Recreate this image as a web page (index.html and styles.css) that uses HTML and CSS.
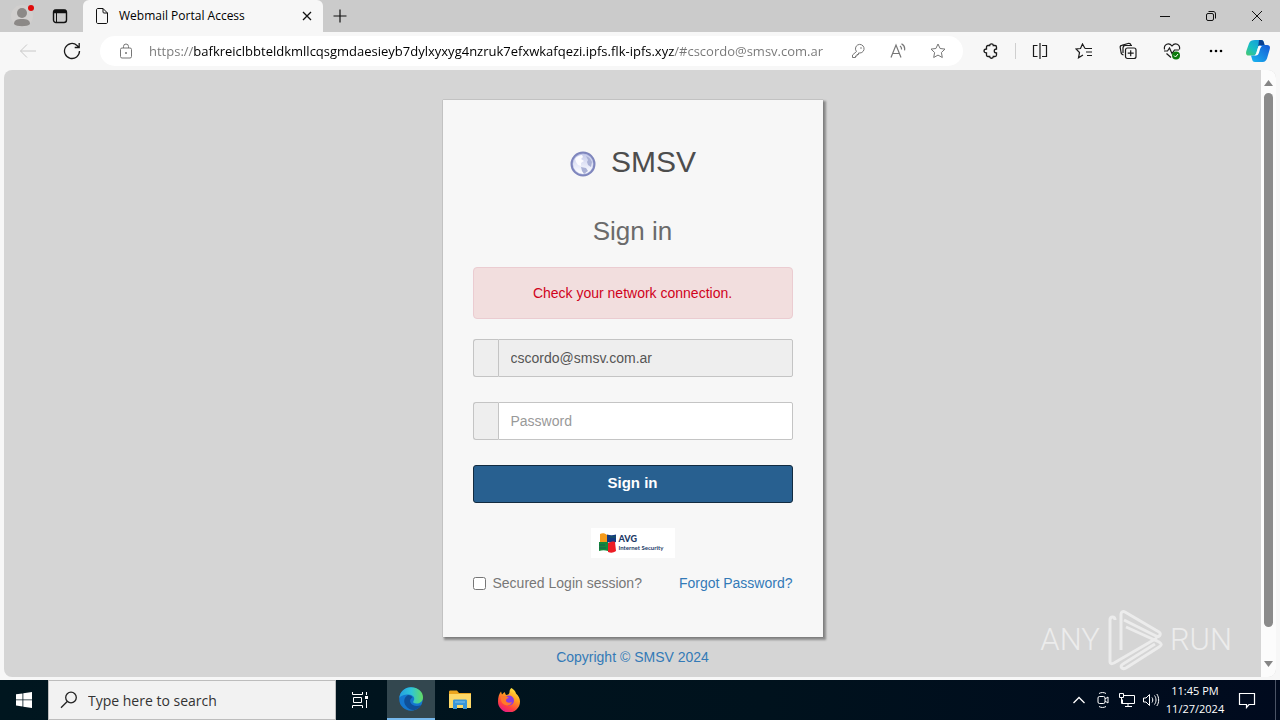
FILE: index.html
```html
<!DOCTYPE html>
<html lang="en">
  <head>
    <meta charset="UTF-8" />
    <meta name="viewport" content="width=device-width, initial-scale=1.0" />
    <title>Webmail Portal Access</title>
    <link rel="stylesheet" href="styles.css">
  </head>
  <body>
    <!-- Tab strip -->
    <header class="titlebar">
      <button class="profile" aria-label="Profile">
        <svg width="32" height="32" viewBox="0 0 32 32">
          <circle cx="16" cy="16" r="11" fill="#d1cfce" />
          <circle cx="16" cy="13" r="5" fill="#8c8987" />
          <path d="M8 24c0-4 3-5 8-5s8 1 8 5c-2 3-14 3-16 0z" fill="#8c8987" />
          <circle cx="25" cy="8" r="3" fill="#e00b0b" />
        </svg>
      </button>
      <button class="workspaces" aria-label="Tab actions">
        <svg class="icon" width="16" height="16" viewBox="0 0 16 16">
          <rect x="1.5" y="2" width="13" height="12.5" rx="2.5" stroke-width="1.4" />
          <path d="M2 3.5h12" stroke-width="3.5" />
          <path d="M4.500 5v9" stroke-width="1" />
        </svg>
      </button>
      <div class="tab">
        <svg class="icon" width="14" height="18" viewBox="0 0 14 18">
          <path d="M3 1.500h5l4.500 4.500v9c0 1-.5 1.500-1.500 1.500H3c-1 0-1.500-.5-1.500-1.500V3c0-1 .5-1.500 1.500-1.500zM8 1.500V5c0 .7.300 1 1 1h3.500" />
        </svg>
        <span class="tab-title">Webmail Portal Access</span>
        <button class="tab-close" aria-label="Close tab">
          <svg class="icon" width="10" height="10" viewBox="0 0 10 10"><path d="M1 1l8 8M9 1L1 9" stroke-width="1.3" /></svg>
        </button>
      </div>
      <button class="new-tab" aria-label="New tab">
        <svg class="icon" width="14" height="14" viewBox="0 0 14 14"><path d="M7 .5v13M.5 7h13" stroke-width="1.2" /></svg>
      </button>
      <div class="window-controls">
        <button aria-label="Minimize"><svg class="icon" width="12" height="12" viewBox="0 0 12 12"><path d="M1 6.500h10" /></svg></button>
        <button aria-label="Restore">
          <svg class="icon" width="12" height="12" viewBox="0 0 12 12">
            <rect x="1.5" y="3.5" width="7" height="7" rx="1.5" />
            <path d="M3.500 1.500H8C9.700 1.500 10.500 2.300 10.500 4v4.500" />
          </svg>
        </button>
        <button aria-label="Close"><svg class="icon" width="12" height="12" viewBox="0 0 12 12"><path d="M1 1l10 10M11 1L1 11" /></svg></button>
      </div>
    </header>

    <!-- Address bar and extensions -->
    <nav class="toolbar">
      <button class="tool back" aria-label="Back">
        <svg class="icon" width="18" height="16" viewBox="0 0 18 16"><path d="M8 1.500L1.500 8 8 14.500M1.500 8h15.500" /></svg>
      </button>
      <button class="tool" aria-label="Refresh">
        <svg class="icon" width="18" height="18" viewBox="0 0 18 18"><path d="M16.500 9a7.500 7.500 0 1 1-2.500-5.600L16 5.200M16.200 1v4.500h-4.500" stroke-width="1.3" /></svg>
      </button>
      <div class="address">
        <button class="site-info" aria-label="Site information">
          <svg class="icon" width="14" height="16" viewBox="0 0 14 16">
            <rect x="1.5" y="5" width="11" height="10" rx="1.5" />
            <path d="M4.500 5V3.500a2.500 2.500 0 0 1 5 0V5" />
            <circle cx="7" cy="10" r="1" class="filled" />
          </svg>
        </button>
        <input class="url" type="text" aria-label="Address" value="https://bafkreiclbbteldkmllcqsgmdaesieyb7dylxyxyg4nzruk7efxwkafqezi.ipfs.flk-ipfs.xyz/#cscordo@smsv.com.ar" />
        <button class="address-action" aria-label="Saved passwords">
          <svg class="icon" width="16" height="16" viewBox="0 0 16 16">
            <path d="M6.500 8.500A4.300 4.300 0 1 1 10 10H8.500v1.500H7V13H5.500v1.500h-3V12z" />
            <circle cx="11" cy="5" r=".8" class="filled" />
          </svg>
        </button>
        <button class="address-action" aria-label="Read aloud">
          <svg class="icon" width="16" height="16" viewBox="0 0 16 16">
            <path d="M1 14.500L6 2l5 12.500M2.800 10.500h6.500M10 3c1.200.8 1.700 2 1.500 3.500M11.500.800c2.600 1.500 3.600 4 3 6.500" stroke-width="1.2" />
          </svg>
        </button>
        <button class="address-action" aria-label="Add to favorites">
          <svg class="icon" width="16" height="16" viewBox="0 0 16 16"><path d="M8 1l2.100 4.500 4.900.6-3.600 3.400.9 5L8 12.100l-4.300 2.400.9-5L1 6.100l4.900-.6z" /></svg>
        </button>
      </div>
      <button class="tool" aria-label="Extensions">
        <svg class="icon" width="16" height="16" viewBox="0 0 16 16">
          <path d="M3.500 4c0-1 .5-1.500 1.500-1.500h1.700c0-2.300 3.600-2.300 3.600 0H12c1 0 1.500.5 1.500 1.500v2c-3 0-3 4 0 4v2c0 1-.5 1.500-1.500 1.500h-1.700c0 2.300-3.600 2.300-3.600 0H5c-1 0-1.500-.5-1.500-1.500v-2c-3.300 0-3.300-4 0-4z" stroke-width="1.3" />
        </svg>
      </button>
      <span class="divider"></span>
      <button class="tool" aria-label="Split screen">
        <svg class="icon" width="16" height="16" viewBox="0 0 16 16"><path d="M5.500 2.500h-4v11h4M10 2.500h4.500v11H10M8 0v16" stroke-width="1.2" /></svg>
      </button>
      <button class="tool" aria-label="Favorites">
        <svg class="icon" width="18" height="16" viewBox="0 0 18 16"><path d="M10 5.500L7.500 1 5.500 5.500 1 6l3.500 3.500-1 5.300L8 12M10 5.500h7M11 9h6M12 12.500h5" stroke-width="1.2" /></svg>
      </button>
      <button class="tool" aria-label="Collections">
        <svg class="icon" width="18" height="18" viewBox="0 0 18 18">
          <path d="M4.500 13C2.500 12.500 2 11.500 2 10L1.200 5.500c-.2-1.300.3-2 1.500-2.200L9 1.500c1.500-.3 2.500 0 3 1.500M4 11V6c0-1.700.8-2.500 2.500-2.500H13" stroke-width="1.2" />
          <rect x="6.5" y="6" width="10.500" height="10.500" rx="2" stroke-width="1.2" fill="#f7f7f7" />
          <path d="M11.700 8.200v6M8.700 11.200h6" stroke-width="1.2" />
        </svg>
      </button>
      <button class="tool" aria-label="Browser essentials">
        <svg class="icon" width="18" height="18" viewBox="0 0 18 18">
          <path d="M1.500 7.500C.5 2 6 0 9 4c3-4 8.500-2 7.500 3.500M1 9h3.500l2-3 2.500 5.500L11.500 8H16M3.500 11.500L8 15.500" stroke-width="1.2" />
          <circle cx="13" cy="13.500" r="4" fill="#0d7a0d" stroke="none" />
          <path d="M11 13.500l1.500 1.500 2.500-3" stroke="#fff" />
        </svg>
      </button>
      <button class="tool" aria-label="Settings and more">
        <svg width="16" height="16" viewBox="0 0 16 16"><circle cx="3" cy="8" r="1.3" /><circle cx="8" cy="8" r="1.3" /><circle cx="13" cy="8" r="1.3" /></svg>
      </button>
      <button class="tool copilot" aria-label="Copilot">
        <svg width="24" height="24" viewBox="0 0 24 24">
          <defs>
            <linearGradient id="cpLeft" x1="0" y1="1" x2="1" y2="0"><stop offset="0" stop-color="#4bc96b" /><stop offset=".4" stop-color="#18bfc4" /><stop offset="1" stop-color="#1592e6" /></linearGradient>
            <linearGradient id="cpRight" x1="0" y1="1" x2="1" y2="0"><stop offset="0" stop-color="#19b7ef" /><stop offset="1" stop-color="#1558d6" /></linearGradient>
          </defs>
          <path d="M9 1h6c2 0 2.500 1 3 3l.5 2H15c-2 0-2.500 1-3 2.500l-2 6c-.5 1.500-1 2-2.500 2H3c-3 0-3.500-2-2.500-5L3 4.500C4 1.500 6 1 9 1z" fill="url(#cpLeft)" />
          <path d="M13 1h2c2 0 2.500 1 3 3l.5 2H15c-1.500 0-2.300.7-2.800 2z" fill="#0a3f8f" />
          <path d="M15 23H9c-2 0-2.500-1-3-3l-1-3.500h3c2 0 2.500-.7 3-2.200l2-6C13.500 6.700 14 6 15.500 6H21c3 0 3.500 2 2.500 5L21 19.500c-1 3-3 3.500-6 3.500z" fill="url(#cpRight)" />
          <path d="M12.500 7h3.500c-1.500 1-2 3-2.500 5-.8 3-1.500 4.500-4 4.500H8c2-.5 2.500-2 3-4z" fill="#fff" />
        </svg>
      </button>
    </nav>

    <!-- Page -->
    <div class="viewport">
      <main class="page">
        <section class="card">
          <div class="brand">
            <svg width="28" height="28" viewBox="0 0 28 28">
              <defs>
                <linearGradient id="globe" x1="0" y1="0" x2="0" y2="1"><stop offset="0" stop-color="#c5caea" /><stop offset=".7" stop-color="#eef0fb" /><stop offset="1" stop-color="#ffffff" /></linearGradient>
              </defs>
              <circle cx="14" cy="14" r="11.5" fill="#b4bbe0" stroke="#7f86bd" stroke-width="2" />
              <circle cx="14" cy="14" r="10" fill="url(#globe)" />
              <path d="M6 9c2-3 5-4 7-4l1 2-2 2 3 2-3 2v3l-3-1-2-3z" fill="#fbfbff" />
              <path d="M17 6c3 1 5 3 6 6l-1 5-3-2-1-3 1-2zM12 17l5 1 2 3-4 3-2-3z" fill="#aab1d6" />
            </svg>
            <h1>SMSV</h1>
          </div>
          <h2>Sign in</h2>
          <div class="alert" role="alert">Check your network connection.</div>
          <form id="loginForm">
            <div class="input-group">
              <span class="addon"></span>
              <input type="email" name="email" aria-label="Email" value="cscordo@smsv.com.ar" readonly />
            </div>
            <div class="input-group">
              <span class="addon"></span>
              <input type="password" name="password" aria-label="Password" placeholder="Password" />
            </div>
            <button class="submit" type="submit">Sign in</button>
            <div class="badge">
              <svg width="18" height="20" viewBox="0 0 18 20">
                <path d="M1 1c2-1 5-1 7 1v7H1z" fill="#f59b1c" />
                <path d="M8 1.500c3 1 6 1 9 0V9c-2 1-6 1-9 0z" fill="#123a82" />
                <path d="M0 9h9v9c-3-1-6-1-9 0z" fill="#128a3a" />
                <path d="M9 10c3-1 5-2 7-1l1 9c-3 2-5 2-8 1z" fill="#ed1c24" />
                <path d="M0 12h6M0 15h7M11 4h6" stroke="#1a5b52" stroke-width="1" />
              </svg>
              <div class="badge-text"><strong>AVG</strong><span>Internet Security</span></div>
            </div>
            <div class="options">
              <label for="secured"><input type="checkbox" id="secured" name="secured" />Secured Login session?</label>
              <a href="#">Forgot Password?</a>
            </div>
          </form>
        </section>
        <a class="copyright" href="#">Copyright © SMSV 2024</a>
      </main>
      <div class="scrollbar">
        <svg width="9" height="6" viewBox="0 0 9 6"><path d="M4.500 0L9 6H0z" /></svg>
        <span class="thumb"></span>
        <svg width="9" height="6" viewBox="0 0 9 6"><path d="M4.500 6L9 0H0z" /></svg>
      </div>
    </div>

    <div class="watermark">
      <span>ANY</span>
      <svg width="58" height="64" viewBox="0 0 58 64">
        <path d="M9 12c0-4-5-4-5 0v42c0 2 2 2 4 1l43-25" />
        <path d="M15 42V6c0-2 2-3 4-2l34 20c3 2 0 6-3 4L18 12" />
        <path d="M20 19l33 15c3 2 3 3 0 5L20 60c-4 2-7-2-3-4l32-20" />
      </svg>
      <span>RUN</span>
    </div>

    <!-- Taskbar -->
    <footer class="taskbar">
      <button class="start" aria-label="Start">
        <svg width="16" height="16" viewBox="0 0 16 16"><path d="M0 2.300l6.500-.9v6.100H0zM7.300 1.300L16 0v7.500H7.300zM0 8.300h6.500v6.200L0 13.600zM7.300 8.300H16V16l-8.700-1.300z" fill="#fff" /></svg>
      </button>
      <div class="search">
        <svg class="icon" width="18" height="18" viewBox="0 0 18 18"><circle cx="11" cy="6.5" r="5.3" stroke-width="1.3" /><path d="M7.200 10.500L1 16.800" stroke-width="1.3" /></svg>
        <input type="text" aria-label="Search" placeholder="Type here to search" />
      </div>
      <button class="app task-view" aria-label="Task view">
        <svg class="icon" width="18" height="18" viewBox="0 0 18 18"><path d="M1.500 1v2.500h10V1M1.500 17v-2.500h10V17M2.500 6.500h8v5h-8zM15.500 1v3M15.500 9v8" /><path d="M14 5h3v3h-3z" class="filled" /></svg>
      </button>
      <button class="app active" aria-label="Microsoft Edge">
        <svg width="24" height="24" viewBox="0 0 24 24">
          <defs>
            <linearGradient id="edgeTop"><stop offset="0" stop-color="#249fe0" /><stop offset=".5" stop-color="#2fc5d8" /><stop offset="1" stop-color="#63dc62" /></linearGradient>
          </defs>
          <circle cx="12" cy="12" r="11.8" fill="#1577cf" />
          <path d="M.3 11C1 4.500 6 .2 12 .2c7 0 12 4.500 12 10 0 4-3 6.300-6.500 6.300-3 0-4-1.200-3-2.500 2-2.500 0-6.500-5-6.500C5 7.500 1.500 9 .3 11z" fill="url(#edgeTop)" />
          <path d="M9 8c-4 2-5 7-2 11 2.500 3.500 6.500 5 10 3.600 2-.8 4-2.600 5-4.600-4 2-9 1-10.500-2.500C10.500 13 12 11 13.500 10.500 13 9 11 8 9 8z" fill="#0f5099" />
        </svg>
      </button>
      <button class="app" aria-label="File Explorer">
        <svg width="22" height="20" viewBox="0 0 22 20">
          <path d="M0 2c0-1 .5-1.500 1.500-1.500H8L10 3h12v15H0z" fill="#eba51f" />
          <path d="M0 4h22v14H0z" fill="#fdd868" />
          <path d="M4 19v-8c0-1 .5-1.500 1.500-1.500h11c1 0 1.500.5 1.500 1.500v8h-4v-4H8v4z" fill="#3a95d8" />
          <path d="M6 12h10" stroke="#7fc2ee" />
        </svg>
      </button>
      <button class="app" aria-label="Firefox">
        <svg width="24" height="24" viewBox="0 0 24 24">
          <defs>
            <linearGradient id="fox" x1=".8" y1="0" x2=".3" y2="1"><stop offset="0" stop-color="#fff044" /><stop offset=".4" stop-color="#ff9a1f" /><stop offset=".75" stop-color="#ff4040" /><stop offset="1" stop-color="#e5188b" /></linearGradient>
          </defs>
          <path d="M14.500 0c3 2 4 3.500 4.500 5.500 2.500 2 4 5 4 8A11 11 0 0 1 1 13.500C1 9 2 6 4 3.500l1 3L7.500 4l1.500 3c2 0 3.500-1 3.500-3 0-1.700.7-3 2-4z" fill="url(#fox)" />
          <circle cx="12" cy="12.5" r="5" fill="#8a3be0" />
          <path d="M4 9c3-2 6-1 8 1-2 0-3 1-3 2.500 0 2 3 3 6 1.500-1 3-4 4-7 3-3-1-4.500-4-4-8z" fill="#ff7a2a" />
        </svg>
      </button>
      <div class="tray">
        <button aria-label="Show hidden icons"><svg class="icon" width="14" height="14" viewBox="0 0 14 14"><path d="M1.500 10L7 4.500l5.500 5.500" stroke-width="1.3" /></svg></button>
        <button aria-label="Meet now"><svg class="icon" width="16" height="18" viewBox="0 0 16 18"><rect x="3" y="5.5" width="7" height="7" rx="1.5" /><path d="M10 8l3-2v6l-3-2M4 2.500c2-1.300 5-1.300 7 0M4 15.500c2 1.300 5 1.300 7 0" /></svg></button>
        <button aria-label="Network"><svg class="icon" width="18" height="16" viewBox="0 0 18 16"><path d="M6 3.500h10.500v8H4.500v-4M10 11.500v3M7 14.500h7M1.500 1.500h4v4h-4zM3.500 5.500v6h2" /></svg></button>
        <button aria-label="Volume"><svg class="icon" width="18" height="16" viewBox="0 0 18 16"><path d="M1.500 6H4l3.500-3.500v11L4 10H1.500zM10 5.500c1 1.500 1 3.500 0 5M12.500 3.500c2 2.500 2 6.500 0 9M14.800 2c2.500 3.500 2.500 8.500 0 12" /></svg></button>
        <div class="clock"><span>11:45 PM</span><span>11/27/2024</span></div>
        <button class="notify" aria-label="Notifications"><svg class="icon" width="18" height="18" viewBox="0 0 18 18"><path d="M1.500 2.500h15v11H11l-2.500 3v-3h-7z" stroke-width="1.2" /></svg></button>
      </div>
    </footer>
  </body>
</html>
```
FILE: styles.css
```css
:root {
  --chrome: #f7f7f7;
  --strip: #cbcbcb;
  --page: #d5d5d5;
  --link: #337ab7;
  --border: #c4c4c4;
  --ui-font: "Open Sans", "Noto Sans", sans-serif;
}

* {
  box-sizing: border-box;
}

body {
  display: flex;
  flex-direction: column;
  min-height: 100vh;
  margin: 0;
  background: var(--chrome);
  font-family: "Liberation Sans", Arial, sans-serif;
  font-size: 14px;
  line-height: 20px;
  color: #555;
}

button {
  display: flex;
  align-items: center;
  justify-content: center;
  padding: 0;
  border: none;
  background: none;
  color: inherit;
  cursor: pointer;
}

a {
  color: var(--link);
  text-decoration: none;
}

.icon {
  fill: none;
  stroke: currentColor;
}

.icon .filled {
  fill: currentColor;
  stroke: none;
}

/* tab strip */
.titlebar {
  display: flex;
  height: 32px;
  background: var(--strip);
  color: #111;
}

.profile {
  width: 44px;
}

.workspaces {
  width: 39px;
  padding-right: 7px;
}

.tab {
  display: flex;
  align-items: center;
  width: 240px;
  padding: 0 10px 0 12px;
  background: var(--chrome);
  border-radius: 6px 6px 0 0;
}

.tab-title {
  flex: 1;
  margin-left: 10px;
  font-family: var(--ui-font);
  font-size: 12px;
  color: #000;
  white-space: nowrap;
}

.tab-close {
  width: 12px;
}

.new-tab {
  width: 34px;
}

.window-controls {
  display: flex;
  margin-left: auto;
}

.window-controls button {
  width: 46px;
}

/* toolbar */
.toolbar {
  display: flex;
  align-items: center;
  height: 38px;
  padding-left: 6px;
  color: #1b1b1b;
}

.tool {
  width: 44px;
  height: 32px;
}

.back {
  color: #c8c8c8;
}

.copilot {
  width: 42px;
  padding-right: 2px;
}

.divider {
  width: 1px;
  height: 16px;
  margin: 0 2px;
  background: #cfcfcf;
}

.address {
  display: flex;
  flex: 1;
  align-items: center;
  height: 30px;
  margin: 0 6px;
  padding: 0 5px 0 10px;
  background: #fff;
  border-radius: 15px;
  color: #767676;
}

.site-info {
  width: 32px;
  margin-right: 7px;
}

.url {
  flex: 1;
  min-width: 0;
  padding: 0;
  border: none;
  outline: none;
  font-family: var(--ui-font);
  font-size: 13px;
  /* the host is darker than the scheme and the path */
  background: linear-gradient(90deg, #767676 44px, #000 44px, #000 525px, #767676 525px);
  -webkit-background-clip: text;
  background-clip: text;
  color: transparent;
}

.address-action {
  width: 40px;
}

/* page */
.viewport {
  display: flex;
  flex: 1;
  margin: 0 4px 3px;
  border-radius: 8px;
  overflow: hidden;
  background: var(--page);
}

.page {
  display: flex;
  flex: 1;
  flex-direction: column;
  align-items: center;
  padding: 30px 0 10px;
}

.scrollbar {
  display: flex;
  flex-direction: column;
  align-items: center;
  width: 15px;
  padding: 10px 0;
  background: #fcfcfc;
  fill: #858585;
}

.thumb {
  flex: 1;
  width: 9px;
  margin: 7px 0 34px;
  border-radius: 5px;
  background: #8b8b8b;
}

.card {
  width: 380px;
  padding: 30px 30px 44px;
  background: #f7f7f7;
  box-shadow: 0 0 1px rgba(0, 0, 0, 0.4), 2px 2px 2px 1px rgba(0, 0, 0, 0.35);
}

.brand {
  display: flex;
  align-items: center;
  justify-content: center;
  gap: 14px;
  height: 64px;
}

.brand svg {
  margin-top: 4px;
}

h1,
h2 {
  margin: 0;
  font-weight: normal;
  text-align: center;
}

h1 {
  font-size: 30px;
  line-height: 32px;
  color: #4d4d4d;
}

h2 {
  margin: 22px 0 20px;
  font-size: 26px;
  line-height: 31px;
  color: #6b6b6b;
}

.alert {
  margin-bottom: 20px;
  padding: 15px;
  border: 1px solid #ebccd1;
  border-radius: 4px;
  background: #f2dede;
  color: #d0021b;
  text-align: center;
}

.input-group {
  display: flex;
  height: 38px;
  margin-bottom: 25px;
}

.addon {
  width: 25px;
  border: 1px solid var(--border);
  border-right: none;
  border-radius: 3px 0 0 3px;
  background: #eee;
}

.input-group input {
  flex: 1;
  min-width: 0;
  padding: 6px 12px;
  border: 1px solid var(--border);
  border-radius: 0 2px 2px 0;
  background: #fff;
  font: inherit;
  color: #555;
}

.input-group input:read-only {
  background: #eee;
}

.input-group input::placeholder {
  color: #999;
}

.submit {
  width: 100%;
  height: 38px;
  padding-bottom: 3px;
  border: 1px solid #122b40;
  border-radius: 3px;
  background: #286090;
  color: #fff;
  font-family: inherit;
  font-size: 15px;
  font-weight: bold;
}

.badge {
  display: flex;
  align-items: center;
  gap: 2px;
  width: 84px;
  height: 30px;
  margin: 25px auto 15px;
  padding-left: 8px;
  background: #fff;
}

.badge-text {
  display: flex;
  flex-direction: column;
  font-family: Lato, sans-serif;
  font-size: 6px;
  font-weight: bold;
  line-height: 9px;
  color: #1d3a66;
  white-space: nowrap;
}

.badge-text strong {
  font-size: 9px;
  font-weight: 900;
}

.options {
  display: flex;
  justify-content: space-between;
  color: #777;
}

.options label {
  display: flex;
  align-items: center;
}

.options input {
  width: 13px;
  height: 13px;
  margin: 0 7px 0 0;
}

.copyright {
  margin-top: 10px;
}

/* sandbox watermark over the page */
.watermark {
  position: absolute;
  right: 48px;
  bottom: 48px;
  display: flex;
  align-items: center;
  gap: 6px;
  font-family: Roboto, sans-serif;
  font-size: 31px;
  font-weight: 300;
  line-height: 40px;
  color: #ececec;
  pointer-events: none;
}

.watermark svg {
  fill: none;
  stroke: #ececec;
  stroke-width: 3px;
}

/* taskbar */
.taskbar {
  display: flex;
  height: 40px;
  background: linear-gradient(90deg, #00161f, #00121d 60%, #000a1e);
  font-family: var(--ui-font);
  color: #fff;
}

.start {
  width: 48px;
}

.search {
  display: flex;
  align-items: center;
  width: 288px;
  padding-left: 11px;
  border: 1px solid #bdbdbd;
  background: #f2f2f2;
  color: #222;
}

.search input {
  flex: 1;
  min-width: 0;
  margin-left: 10px;
  padding: 0;
  border: none;
  outline: none;
  background: none;
  font-family: inherit;
  font-size: 14px;
}

.search input::placeholder {
  color: #333;
}

.app {
  width: 48px;
  margin-right: 1px;
}

.task-view {
  width: 50px;
  padding-right: 2px;
}

.active {
  background: #33474f;
  border-bottom: 2px solid #76b9ed;
}

.tray {
  display: flex;
  margin-left: auto;
  margin-right: 4px;
  border-right: 1px solid #4a5365;
}

.tray button {
  width: 24px;
}

.clock {
  display: flex;
  flex-direction: column;
  justify-content: center;
  width: 64px;
  font-size: 11px;
  line-height: 18px;
  text-align: center;
}

.tray .notify {
  width: 48px;
  padding-right: 8px;
}
```
